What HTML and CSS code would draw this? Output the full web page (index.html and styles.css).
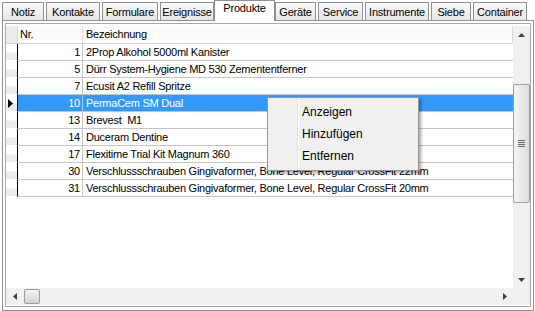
FILE: index.html
```html
<!DOCTYPE html>
<html>
<head>
  <title>Produkte</title>
  <link rel="stylesheet" href="styles.css">
</head>
<body>
  <div class="tabs">
    <div class="tab notiz">Notiz</div>
    <div class="tab kontakte">Kontakte</div>
    <div class="tab formulare">Formulare</div>
    <div class="tab ereignisse">Ereignisse</div>
    <div class="tab produkte active">Produkte</div>
    <div class="tab geraete">Geräte</div>
    <div class="tab service">Service</div>
    <div class="tab instrumente">Instrumente</div>
    <div class="tab siebe">Siebe</div>
    <div class="tab container">Container</div>
  </div>

  <div class="panel">
    <div class="grid">
      <div class="view">
        <div class="row head">
          <div class="ind"></div>
          <div class="nr">Nr.</div>
          <div class="name">Bezeichnung</div>
        </div>
        <div class="row"><div class="ind"></div><div class="nr">1</div><div class="name">2Prop Alkohol 5000ml Kanister</div></div>
        <div class="row"><div class="ind"></div><div class="nr">5</div><div class="name">Dürr System-Hygiene MD 530 Zemententferner</div></div>
        <div class="row"><div class="ind"></div><div class="nr">7</div><div class="name">Ecusit A2 Refill Spritze</div></div>
        <div class="row sel">
          <div class="ind"><svg width="5" height="9" viewBox="0 0 5 9"><path d="M0 0 L5 4.5 L0 9 Z" fill="#000"/></svg></div>
          <div class="nr">10</div><div class="name">PermaCem SM Dual</div>
        </div>
        <div class="row"><div class="ind"></div><div class="nr">13</div><div class="name">Brevest&nbsp; M1</div></div>
        <div class="row"><div class="ind"></div><div class="nr">14</div><div class="name">Duceram Dentine</div></div>
        <div class="row"><div class="ind"></div><div class="nr">17</div><div class="name">Flexitime Trial Kit Magnum 360</div></div>
        <div class="row"><div class="ind"></div><div class="nr">30</div><div class="name">Verschlussschrauben Gingivaformer, Bone Level, Regular CrossFit 22mm</div></div>
        <div class="row"><div class="ind"></div><div class="nr">31</div><div class="name">Verschlussschrauben Gingivaformer, Bone Level, Regular CrossFit 20mm</div></div>
      </div>

      <div class="vscroll">
        <div class="btn"><svg width="7" height="4" viewBox="0 0 7 4"><path d="M0 4 L3.5 0 L7 4 Z" fill="#3c3c3c"/></svg></div>
        <div class="track vtrack">
          <div class="vthumb">
            <svg width="7" height="8" viewBox="0 0 7 8">
              <path d="M0 0.5 H7 M0 2.5 H7 M0 4.5 H7 M0 6.5 H7" stroke="#6a6a6a" stroke-width="1"/>
            </svg>
          </div>
        </div>
        <div class="btn"><svg width="7" height="4" viewBox="0 0 7 4"><path d="M0 0 L3.5 4 L7 0 Z" fill="#3c3c3c"/></svg></div>
      </div>

      <div class="hscroll">
        <div class="btn"><svg width="4" height="7" viewBox="0 0 4 7"><path d="M4 0 L0 3.5 L4 7 Z" fill="#3c3c3c"/></svg></div>
        <div class="track htrack"><div class="hthumb"></div></div>
        <div class="btn"><svg width="4" height="7" viewBox="0 0 4 7"><path d="M0 0 L4 3.5 L0 7 Z" fill="#3c3c3c"/></svg></div>
      </div>

      <div class="corner"></div>
    </div>
  </div>

  <div class="menu">
    <div class="item">Anzeigen</div>
    <div class="item">Hinzufügen</div>
    <div class="item">Entfernen</div>
  </div>
</body>
</html>
```

FILE: styles.css
```css
body { margin: 0; background: #fff; font-family: "Liberation Sans", Arial, sans-serif; font-size: 11px; color: #000; }

/* tab strip */
.tabs { display: flex; align-items: flex-end; height: 20px; padding-left: 2px; letter-spacing: -0.2px; }
.tab { box-sizing: border-box; height: 18px; margin-right: 2px; padding-top: 3px; line-height: 13px; text-align: center; white-space: nowrap; border: 1px solid #8d9096; border-bottom: none; background: linear-gradient(#fbfbfb, #e6e6e6); }
.tab.active { position: relative; z-index: 1; height: 21px; margin: 0 0 -1px -2px; padding-top: 1px; background: #fff; }
.notiz { width: 42px; }
.kontakte { width: 54px; }
.formulare { width: 56px; }
.ereignisse { width: 54px; }
.produkte { width: 61px; }
.geraete { width: 41px; }
.service { width: 45px; }
.instrumente { width: 64px; }
.siebe { width: 40px; }
.container { width: 54px; }

/* page frame */
.panel { box-sizing: border-box; width: 532px; height: 291px; margin-left: 2px; padding: 2px 2px 3px; border: 1px solid #8d9096; background: #fff; }
.grid { box-sizing: border-box; height: 284px; padding: 2px 0 1px; border: 1px solid #a9a9a9; display: grid; grid-template-columns: 1fr 17px; grid-template-rows: 1fr 17px; }
.view { overflow: hidden; background: #fff; letter-spacing: -0.25px; }

/* rows */
.row { display: grid; grid-template-columns: 12px 65px 1fr; height: 17px; }
.row > div { box-sizing: border-box; line-height: 16px; white-space: nowrap; overflow: hidden; border-bottom: 1px solid #c6c6c6; }
.row .ind { display: flex; align-items: center; padding-left: 2px; border-right: 1px solid #000; border-bottom-color: #fff; background: linear-gradient(#fff, #fff 50%, #ececec 55%, #ececec); }
.row .nr { padding-right: 2px; text-align: right; border-right: 1px solid #c6c6c6; }
.row .name { padding-left: 3px; }
.row.head { height: 18px; }
.row.head > div { line-height: 17px; background: #fbfbfb; border-bottom: 1px solid #d5d5d5; border-right: 1px solid #dcdcdc; }
.row.head .ind { background: #ececec; border-right-color: #d5d5d5; }
.row.head .nr { padding-left: 2px; text-align: left; }
.row.sel .nr, .row.sel .name { background: #3399ff; color: #fff; }
.row.sel .nr { border-right-color: #9cc9f7; }

/* scrollbars */
.vscroll, .hscroll, .corner { background: #f0f0f0; }
.vscroll { display: flex; flex-direction: column; }
.hscroll { display: flex; }
.btn { flex: 0 0 17px; display: flex; align-items: center; justify-content: center; }
.track { flex: 1; }
.vtrack { padding-top: 41px; }
.htrack { padding-left: 1px; }
.vthumb { box-sizing: border-box; height: 119px; display: flex; align-items: center; justify-content: center; border: 1px solid #9e9e9e; border-radius: 2px; background: linear-gradient(to right, #f4f4f4, #dcdcdc); }
.hthumb { box-sizing: border-box; width: 16px; height: 15px; margin-top: 1px; border: 1px solid #9e9e9e; border-radius: 2px; background: linear-gradient(#f4f4f4, #d4d4d4); }

/* context menu */
.menu { position: absolute; left: 267px; top: 97px; box-sizing: border-box; width: 152px; padding: 3px 2px; border: 1px solid #979797; font-size: 12px; background: linear-gradient(to right, transparent 29px, #e2e3e3 29px, #e2e3e3 30px, #fff 30px, #fff 31px, transparent 31px), #f0f0f0; box-shadow: 2px 2px 3px rgba(0,0,0,0.35); }
.item { height: 22px; line-height: 22px; padding-left: 32px; }
```
